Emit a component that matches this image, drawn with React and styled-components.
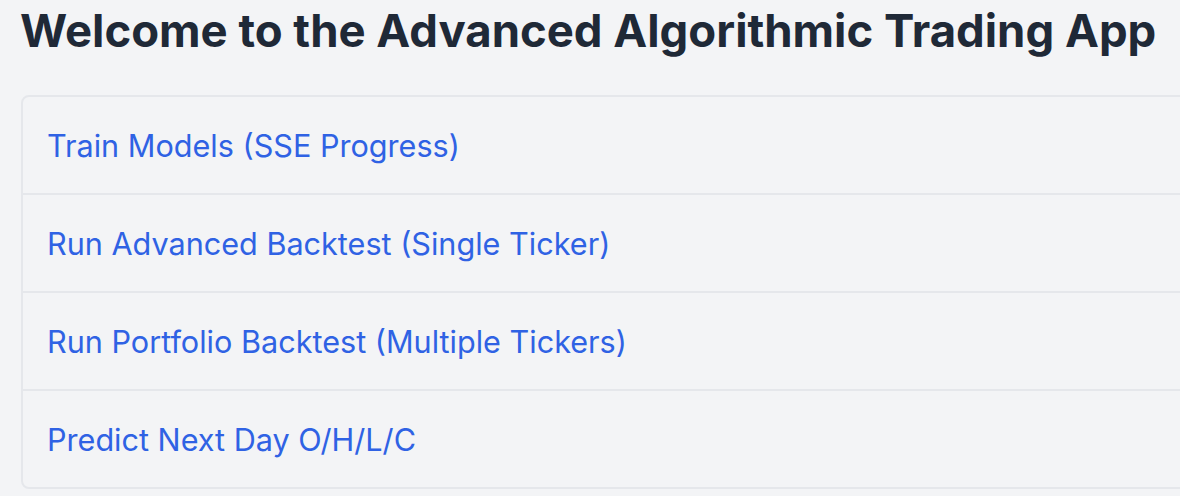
import React from "react";
import styled, { createGlobalStyle } from "styled-components";

const GlobalStyle = createGlobalStyle`
  html, body {
    margin: 0;
    padding: 0;
    background: #f3f4f6;
    overflow: hidden;
  }
  body {
    font-family: Inter, "Noto Sans", "Liberation Sans", sans-serif;
  }
`;

const Page = styled.div`
  width: 1240px;
  padding: 3px 0 0 20px;
  box-sizing: border-box;
`;

const Title = styled.h1`
  margin: 0 0 36px 0;
  font-size: 45.5px;
  line-height: 56px;
  font-weight: 700;
  color: #1f2937;
`;

const Menu = styled.ul`
  list-style: none;
  margin: 0 0 0 1px;
  padding: 0;
  border: 2px solid #e5e7eb;
  border-radius: 8px;
`;

const Item = styled.li`
  height: 96px;
  display: flex;
  align-items: center;
  padding-left: 24px;
  border-bottom: ${(p) => (p.$last ? "none" : "2px solid #e5e7eb")};
`;

const ItemLink = styled.a`
  color: #2f62e4;
  font-size: 30.6px;
  text-decoration: none;
  cursor: pointer;
`;

const items = [
  "Train Models (SSE Progress)",
  "Run Advanced Backtest (Single Ticker)",
  "Run Portfolio Backtest (Multiple Tickers)",
  "Predict Next Day O/H/L/C",
];

export default function App() {
  return (
    <>
      <GlobalStyle />
      <Page>
        <Title>Welcome to the Advanced Algorithmic Trading App</Title>
        <Menu>
          {items.map((label, i) => (
            <Item key={label} $last={i === items.length - 1}>
              <ItemLink href="#">{label}</ItemLink>
            </Item>
          ))}
        </Menu>
      </Page>
    </>
  );
}
